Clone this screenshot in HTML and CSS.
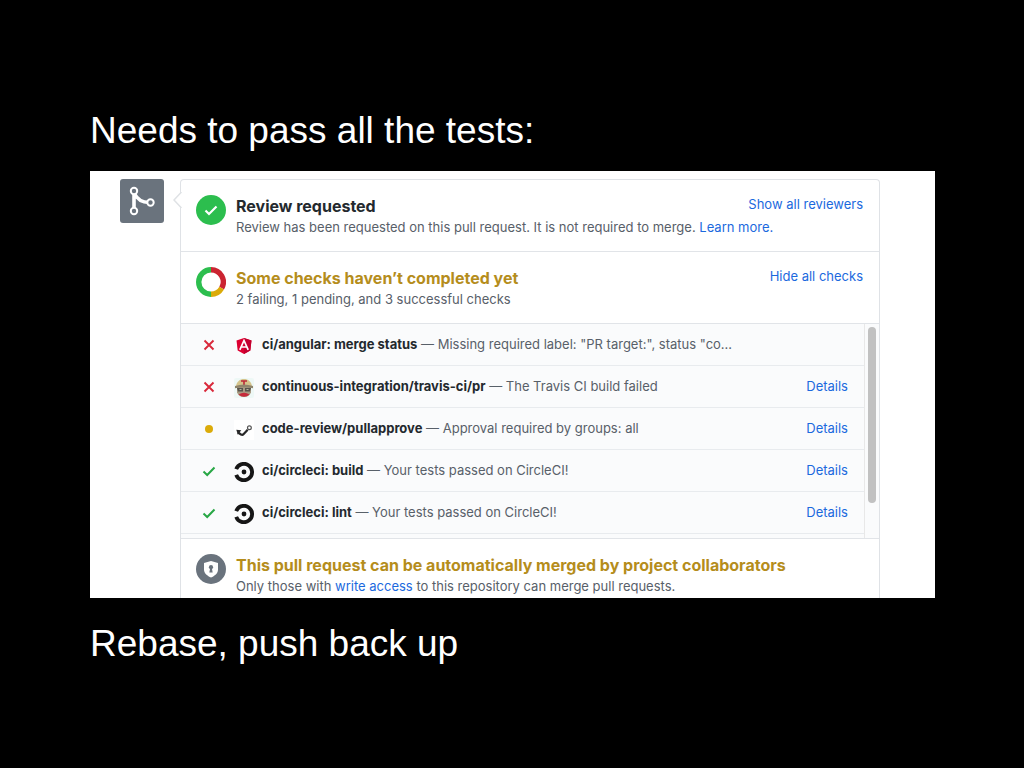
FILE: index.html
```html
<!DOCTYPE html>
<html lang="en">
<head>
<meta charset="utf-8">
<title>Needs to pass all the tests</title>
<link rel="stylesheet" href="styles.css">
</head>
<body>
<main class="slide">
  <h1 class="caption">Needs to pass all the tests:</h1>

  <section class="shot">
    <div class="avatar">
      <svg width="44" height="44" viewBox="0 0 44 44" aria-hidden="true">
        <path d="M14 13v19M14 14c3 6 8 9.500 15 9.500" fill="none" stroke="#fff" stroke-width="3.600"/>
        <g fill="#6a737d" stroke="#fff" stroke-width="2"><circle cx="14" cy="12" r="3.200"/><circle cx="14" cy="32" r="3.200"/><circle cx="30.500" cy="23.500" r="3.200"/></g>
      </svg>
    </div>

    <div class="card">
      <svg class="pointer" width="9" height="16" viewBox="0 0 9 16" aria-hidden="true"><path d="M9 0v16L1 8z" fill="#fff"/><path d="M8.500 0L1 8l7.500 8" fill="none" stroke="#dfe2e5" stroke-width="1.500"/></svg>

      <div class="item">
        <svg class="status" width="30" height="30" viewBox="0 0 30 30" aria-hidden="true"><circle cx="15" cy="15" r="15" fill="#2cbe4e"/><path d="M9.500 15.500l3.500 3.500 7.500-7.500" fill="none" stroke="#fff" stroke-width="2.200"/></svg>
        <div class="body">
          <div class="head">
            <h2 class="title">Review requested</h2>
            <button class="toggle" type="button">Show all reviewers</button>
          </div>
          <p class="note">Review has been requested on this pull request. It is not required to merge. <a href="#">Learn more.</a></p>
        </div>
      </div>

      <div class="item">
        <svg class="status" width="30" height="30" viewBox="0 0 30 30" aria-hidden="true">
          <g fill="none" stroke-width="5.400"><path d="M15 2.700a12.300 12.300 0 0 1 10.650 18.450" stroke="#cb2431"/><path d="M25.650 21.150A12.300 12.300 0 0 1 15 27.300" stroke="#dbab09"/><path d="M15 27.300a12.300 12.300 0 0 1 0-24.600" stroke="#2cbe4e"/></g>
        </svg>
        <div class="body">
          <div class="head">
            <h2 class="title pending">Some checks haven’t completed yet</h2>
            <button class="toggle" type="button">Hide all checks</button>
          </div>
          <p class="note">2 failing, 1 pending, and 3 successful checks</p>
        </div>
      </div>

      <div class="checks">
        <ul class="list">
          <li class="row">
            <svg class="mark" width="14" height="14" viewBox="0 0 14 14" aria-hidden="true"><path d="M2.500 2.500l9 9M11.500 2.500l-9 9" stroke="#d9283a" stroke-width="1.900"/></svg>
            <svg class="app" width="20" height="20" viewBox="0 0 20 20" aria-hidden="true"><path d="M10 2l7.500 2.500-1.200 10L10 18l-6.300-3.500-1.200-10z" fill="#dd0031"/><path d="M10 2l7.500 2.500-1.200 10L10 18z" fill="#c3002f"/><path d="M5.800 13.800L10 4.500l4.200 9.300M7.500 11h5" fill="none" stroke="#fff" stroke-width="1.700"/></svg>
            <p class="text"><strong>ci/angular: merge status</strong> — Missing required label: "PR target:", status "co...</p>
          </li>
          <li class="row">
            <svg class="mark" width="14" height="14" viewBox="0 0 14 14" aria-hidden="true"><path d="M2.500 2.500l9 9M11.500 2.500l-9 9" stroke="#d9283a" stroke-width="1.900"/></svg>
            <svg class="app" width="20" height="20" viewBox="0 0 20 20" aria-hidden="true"><rect width="20" height="20" rx="2" fill="#eef8f6"/><path d="M3 9h14v5.500Q15 19 10 19t-7-4.500z" fill="#a99b83"/><path d="M2 8.500C2.500 3.500 6 1 10 1s7.500 2.500 8 7.500z" fill="#d5c38b"/><path d="M7 2.200h6v1.500h-2.200V7H9.200V3.700H7z" fill="#bd2937"/><path d="M1 8q9-3 18 0v2.200q-9-2-18 0z" fill="#8f846c"/><path d="M3 10h6v3.500H4zM11 10h6l-1 3.500h-5z" fill="#57544d"/><path d="M5.500 11.500h2M12.500 11.500h2" stroke="#b9b29d"/><path d="M4.500 16.500q5.500-3.500 11 0Q13 18.800 10 18.800T4.500 16.500z" fill="#c52b3b"/></svg>
            <p class="text"><strong>continuous-integration/travis-ci/pr</strong> — The Travis CI build failed</p>
            <a class="details" href="#">Details</a>
          </li>
          <li class="row">
            <svg class="mark" width="14" height="14" viewBox="0 0 14 14" aria-hidden="true"><circle cx="7" cy="7" r="4" fill="#dbab09"/></svg>
            <svg class="app" width="20" height="20" viewBox="0 0 20 20" aria-hidden="true"><rect width="20" height="20" fill="#fff"/><path d="M4 12.500l3 2q1.500.8 2.700-.5l4-4.200" fill="none" stroke="#292929" stroke-width="2.200"/><path d="M2.300 9.800l5 .5-3.500 4.400z" fill="#292929"/><circle cx="15.400" cy="7.800" r="1.900" fill="#fff" stroke="#555" stroke-width="1.200"/></svg>
            <p class="text"><strong>code-review/pullapprove</strong> — Approval required by groups: all</p>
            <a class="details" href="#">Details</a>
          </li>
          <li class="row">
            <svg class="mark" width="14" height="14" viewBox="0 0 14 14" aria-hidden="true"><path d="M1.500 7.500l3.700 3.500 7.300-7.500" fill="none" stroke="#28a745" stroke-width="2"/></svg>
            <svg class="app" width="20" height="20" viewBox="0 0 20 20" aria-hidden="true"><path d="M2.200 7.200a8.200 8.200 0 1 1 0 5.600" fill="none" stroke="#161616" stroke-width="3.800"/><circle cx="10" cy="10" r="2.400" fill="#161616"/></svg>
            <p class="text"><strong>ci/circleci: build</strong> — Your tests passed on CircleCI!</p>
            <a class="details" href="#">Details</a>
          </li>
          <li class="row">
            <svg class="mark" width="14" height="14" viewBox="0 0 14 14" aria-hidden="true"><path d="M1.500 7.500l3.700 3.500 7.300-7.500" fill="none" stroke="#28a745" stroke-width="2"/></svg>
            <svg class="app" width="20" height="20" viewBox="0 0 20 20" aria-hidden="true"><path d="M2.200 7.200a8.200 8.200 0 1 1 0 5.600" fill="none" stroke="#161616" stroke-width="3.800"/><circle cx="10" cy="10" r="2.400" fill="#161616"/></svg>
            <p class="text"><strong>ci/circleci: lint</strong> — Your tests passed on CircleCI!</p>
            <a class="details" href="#">Details</a>
          </li>
        </ul>
        <div class="track"><div class="thumb"></div></div>
      </div>

      <div class="item last">
        <svg class="status" width="30" height="30" viewBox="0 0 30 30" aria-hidden="true"><circle cx="15" cy="15" r="15" fill="#6a737d"/><path d="M15 7l7 2v6.500c0 4-3.500 6.500-7 8-3.500-1.500-7-4-7-8V9z" fill="#fff"/><circle cx="15" cy="13.200" r="2.100" fill="#6a737d"/><path d="M14.200 14h1.600l.9 4.500h-3.400z" fill="#6a737d"/></svg>
        <div class="body">
          <h2 class="title pending">This pull request can be automatically merged by project collaborators</h2>
          <p class="note">Only those with <a href="#">write access</a> to this repository can merge pull requests.</p>
        </div>
      </div>
    </div>
  </section>

  <p class="caption">Rebase, push back up</p>
</main>
</body>
</html>
```
FILE: styles.css
```css
* { box-sizing: border-box; }

body {
  margin: 0;
  background: #000;
  font-family: Inter, "Open Sans", sans-serif;
}

h1, h2, p, ul { margin: 0; padding: 0; }

a { color: #1b69de; text-decoration: none; }

.slide {
  min-height: 100vh;
  padding: 108px 89px 96px 90px;
}

.caption {
  color: #fff;
  font: 400 37px/46px "Liberation Sans", Arial, sans-serif;
}

.shot {
  display: flex;
  gap: 16px;
  margin: 17px 0 23px;
  padding: 8px 55px 0 30px;
  background: #fff;
}

.avatar {
  flex: none;
  width: 44px;
  height: 44px;
  border-radius: 3px;
  background: #6a737d;
}

.card {
  position: relative;
  flex: 1;
  min-width: 0;
  border: 1px solid #dfe2e6;
  border-bottom: 0;
  border-radius: 4px 4px 0 0;
}

.pointer {
  position: absolute;
  top: 12px;
  left: -8px;
}

.item {
  display: flex;
  align-items: flex-start;
  gap: 10px;
  padding: 15px 16px 14px 15px;
  border-bottom: 1px solid #e1e4e8;
}

.item.last { padding-bottom: 2px; border-bottom: 0; }

.status { flex: none; }

.body { flex: 1; min-width: 0; }

.head {
  display: flex;
  align-items: flex-start;
  justify-content: space-between;
}

.title {
  color: #24292e;
  font-size: 16px;
  font-weight: 700;
  line-height: 22px;
}

.title.pending { color: #b58d1c; }

.note {
  color: #586069;
  font-size: 13px;
  line-height: 20px;
}

.toggle {
  padding: 0;
  border: 0;
  background: none;
  color: #1b69de;
  font: 400 13px/18px Inter, "Open Sans", sans-serif;
}

.checks {
  display: flex;
  border-bottom: 1px solid #e1e4e8;
  background: #fafbfc;
}

.list {
  flex: 1;
  min-width: 0;
  padding-bottom: 4px;
  list-style: none;
}

.row {
  display: flex;
  align-items: center;
  height: 42px;
  padding: 0 16px 0 21px;
  border-bottom: 1px solid #e8ebee;
}

.mark { flex: none; margin-right: 18px; }

.app { flex: none; margin: 2px 8px 0 0; }

.text, .details {
  padding-bottom: 2px;
  font-size: 13px;
  line-height: 20px;
}

.text {
  flex: 1;
  min-width: 0;
  color: #586069;
  white-space: nowrap;
}

.text strong { color: #24292e; font-weight: 700; }

.track {
  width: 15px;
  padding: 3px 3px 0;
  border-left: 1px solid #e8e8e8;
}

.thumb {
  height: 176px;
  border-radius: 4px;
  background: #c1c1c1;
}
```
